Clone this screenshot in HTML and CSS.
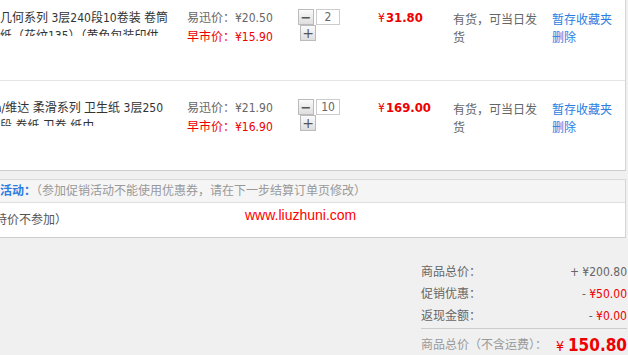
FILE: index.html
```html
<!DOCTYPE html>
<html lang="zh-CN">
<head>
    <meta charset="UTF-8">
    <title>购物车</title>
    <link rel="stylesheet" href="styles.css">
</head>
<body>

    <!-- Cart items -->
    <div class="cart">
        <div class="item">
            <div class="name">几何系列 3层240段10卷装 卷筒纸（花纹135）（黄色包装印供</div>
            <div class="price">
                <p class="normal">易迅价：¥20.50</p>
                <p class="early">早市价：¥15.90</p>
            </div>
            <div class="qty">
                <div class="qty-row">
                    <button class="btn minus">−</button>
                    <input class="num" type="text" value="2">
                </div>
                <button class="btn plus">+</button>
            </div>
            <div class="sum">¥<b>31.80</b></div>
            <div class="stock">有货，可当日发货</div>
            <div class="ops">
                <a href="#">暂存收藏夹</a>
                <a href="#">删除</a>
            </div>
        </div>

        <div class="item">
            <div class="name cut">a/维达 柔滑系列 卫生纸 3层250段 卷纸 卫卷 纸巾</div>
            <div class="price">
                <p class="normal">易迅价：¥21.90</p>
                <p class="early">早市价：¥16.90</p>
            </div>
            <div class="qty">
                <div class="qty-row">
                    <button class="btn minus">−</button>
                    <input class="num" type="text" value="10">
                </div>
                <button class="btn plus">+</button>
            </div>
            <div class="sum">¥<b>169.00</b></div>
            <div class="stock">有货，可当日发货</div>
            <div class="ops">
                <a href="#">暂存收藏夹</a>
                <a href="#">删除</a>
            </div>
        </div>
    </div>

    <!-- Promotion -->
    <div class="promo">
        <div class="promo-head"><b>活动：</b>（参加促销活动不能使用优惠券，请在下一步结算订单页修改）</div>
        <div class="promo-body">
            <span class="cut">特价不参加）</span>
            <span class="mark">www.liuzhuni.com</span>
        </div>
    </div>

    <!-- Totals -->
    <div class="summary">
        <div class="line"><span>商品总价：</span><span>+ ¥200.80</span></div>
        <div class="line"><span>促销优惠：</span><span>- <em>¥50.00</em></span></div>
        <div class="line"><span>返现金额：</span><span>- <em>¥0.00</em></span></div>
        <div class="total">
            <span>商品总价（不含运费）：</span>
            <span class="total-num">¥<b>150.80</b></span>
        </div>
    </div>

</body>
</html>
```

FILE: styles.css
```css
/* Page */
body {
    margin: 0;
    background: #f0f0f0;
    font-family: "DejaVu Sans Condensed", "DejaVu Sans", "Noto Sans CJK SC", sans-serif;
    font-size: 12px;
    line-height: 18px;
    color: #333;
    overflow: hidden;
}

p {
    margin: 0;
}

a {
    color: #2b7de1;
    text-decoration: none;
}

/* Cart list */
.cart {
    margin-top: -9px;
    width: 625px;
    background: #fff;
    border-right: 1px solid #d5d5d5;
    border-bottom: 1px solid #ccc;
}

.item {
    display: grid;
    grid-template-columns: 187px 111px 80px 75px 99px 73px;
    height: 89px;
    padding-top: 18px;
    box-sizing: border-box;
}

.item + .item {
    height: 90px;
    border-top: 1px solid #e5e5e5;
}

.name {
    width: 173px;
    height: 27px;
    overflow: hidden;
}

.cut {
    text-indent: -5px;
}

.price {
    line-height: 19px;
    color: #666;
}

.price .early {
    color: #e00;
}

/* Quantity */
.qty-row {
    display: flex;
    gap: 2px;
}

.btn {
    width: 16px;
    height: 16px;
    padding: 0;
    border: 1px solid #bbb;
    background: linear-gradient(#fafafa, #dedede);
    color: #555;
    font-family: "DejaVu Sans", sans-serif;
    font-size: 13px;
    font-weight: bold;
    line-height: 13px;
    display: block;
}

.plus {
    margin-left: 2px;
    font-weight: normal;
    font-size: 14px;
}

.num {
    width: 24px;
    height: 16px;
    padding: 0;
    border: 1px solid #ccc;
    box-sizing: border-box;
    text-align: center;
    font: 12px "DejaVu Sans Condensed", "DejaVu Sans", sans-serif;
    color: #666;
}

.sum {
    color: #e00;
}

.sum b {
    font-size: 13px;
    margin-left: 1px;
}

.stock {
    padding-top: 2px;
    width: 90px;
    color: #666;
}

.ops {
    padding-top: 2px;
    display: flex;
    flex-direction: column;
    align-items: flex-start;
}

/* Promotion */
.promo {
    margin-top: 8px;
    width: 625px;
    background: #fff;
    border-top: 1px solid #d9d9d9;
    border-right: 1px solid #d5d5d5;
    border-bottom: 1px solid #ccc;
}

.promo-head {
    height: 22px;
    line-height: 22px;
    background: #f5f5f5;
    border-bottom: 1px solid #e0e0e0;
    color: #999;
}

.promo-head b {
    color: #2b7de1;
}

.promo-body {
    position: relative;
    height: 34px;
    line-height: 35px;
    color: #555;
}

.promo-body .cut {
    display: inline-block;
}

.mark {
    position: absolute;
    left: 245px;
    top: 3px;
    line-height: 18px;
    font-family: "Liberation Sans", Arial, sans-serif;
    font-size: 14px;
    color: #f00;
}

/* Totals */
.summary {
    width: 206px;
    margin: 23px 1px 0 auto;
    color: #666;
}

.line {
    display: flex;
    justify-content: space-between;
    line-height: 22px;
}

.line em {
    font-style: normal;
    color: #e00;
}

.total {
    margin-top: 1px;
    border-top: 1px solid #ccc;
    display: flex;
    justify-content: space-between;
    line-height: 32px;
    color: #999;
}

.total-num {
    color: #e00;
    font-size: 14px;
}

.total-num b {
    font-size: 17px;
    margin-left: 4px;
}
```
